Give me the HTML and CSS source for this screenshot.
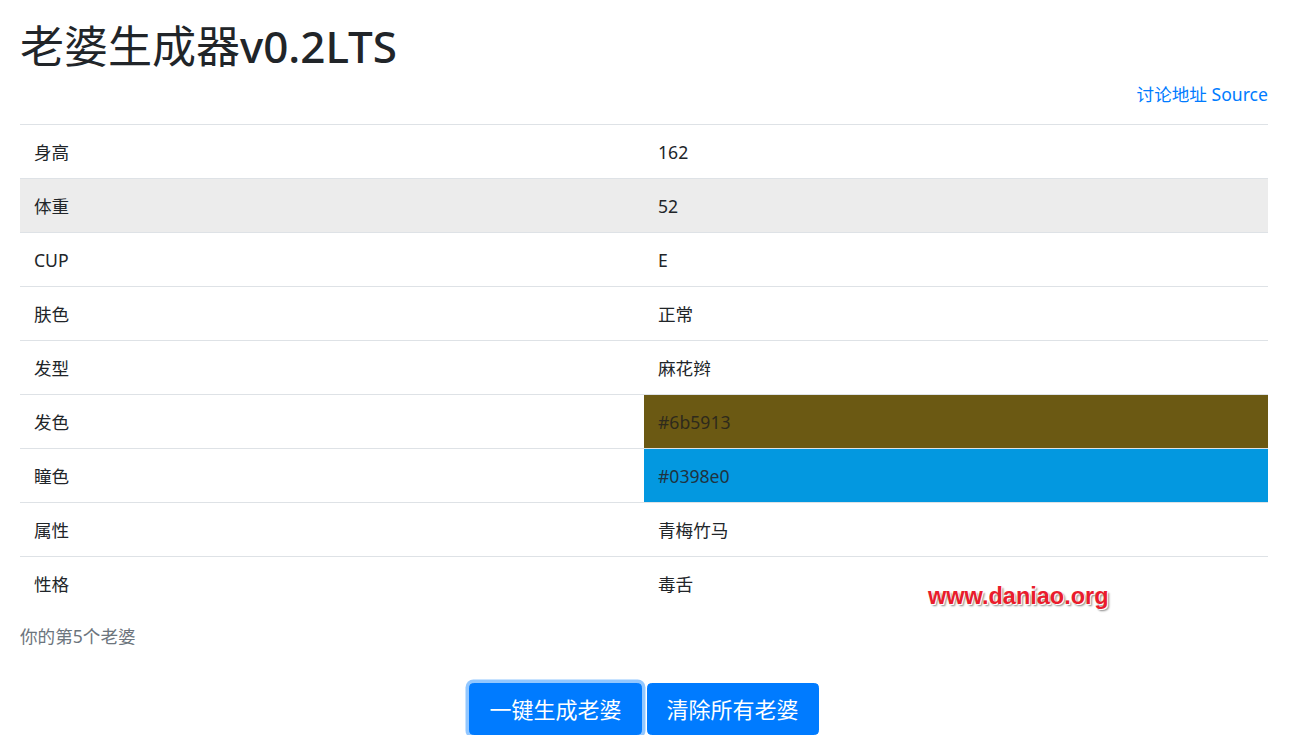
FILE: index.html
```html
<!DOCTYPE html>
<html lang="zh-CN">
<head>
    <meta charset="UTF-8">
    <title>老婆生成器v0.2LTS</title>
    <link rel="stylesheet" href="styles.css">
</head>
<body>
    <div class="container">
        <!-- 标题 -->
        <h1 class="title">老婆生成器<span class="ver">v0.2LTS</span></h1>
        <p class="links"><a href="javascript:;">讨论地址</a> <a href="javascript:;">Source</a></p>

        <!-- 老婆属性表 -->
        <table class="table">
            <tr><td>身高</td><td>162</td></tr>
            <tr class="hover"><td>体重</td><td>52</td></tr>
            <tr><td>CUP</td><td>E</td></tr>
            <tr><td>肤色</td><td>正常</td></tr>
            <tr><td>发型</td><td>麻花辫</td></tr>
            <tr><td>发色</td><td class="hair">#6b5913</td></tr>
            <tr><td>瞳色</td><td class="eye">#0398e0</td></tr>
            <tr><td>属性</td><td>青梅竹马</td></tr>
            <tr><td>性格</td><td>毒舌</td></tr>
            <caption>你的第5个老婆</caption>
        </table>

        <!-- 按钮 -->
        <div class="btns">
            <a href="javascript:;" class="btn focus">一键生成老婆</a>
            <a href="javascript:;" class="btn">清除所有老婆</a>
        </div>

        <!-- 水印 -->
        <div class="mark">www.daniao.org</div>
    </div>
</body>
</html>
```

FILE: styles.css
```css
*{
    margin: 0;
    padding: 0;
    box-sizing: border-box;
}
body{
    font-family: "Noto Sans", "Noto Sans CJK SC", sans-serif;
    font-size: 17.6px;
    line-height: 26.4px;
    color: #212529;
    background: #fff;
}
.container{
    position: relative;
    padding: 20px 40px 0 20px;
}
.title{
    font-size: 44px;
    font-weight: 400;
    line-height: 53px;
    margin-bottom: 8px;
}
.title .ver{
    font-weight: 500;
}
.links{
    text-align: right;
    margin-bottom: 17px;
}
.links a{
    color: #007bff;
    text-decoration: none;
}
.table{
    width: 100%;
    border-collapse: collapse;
    caption-side: bottom;
}
.table td{
    width: 50%;
    padding: 13.3px 14px;
    border-top: 1px solid #dee2e6;
    vertical-align: top;
}
.table tr.hover td{
    background: #ececec;
}
.table td.hair{
    background: #6b5913;
    color: #2e2a1c;
}
.table td.eye{
    background: #0398e0;
    color: #1f3340;
}
.table caption{
    text-align: left;
    color: #6c757d;
    padding: 13px 0;
}
/* 按钮 */
.btns{
    display: flex;
    justify-content: center;
    gap: 5px;
    padding-top: 20px;
}
.btn{
    display: block;
    font-size: 22px;
    line-height: 33px;
    padding: 8.8px 19px;
    border: 1px solid #007bff;
    border-radius: 4.5px;
    background: #007bff;
    color: #fff;
    text-decoration: none;
}
.btn.focus{
    box-shadow: 0 0 0 3.5px rgba(38, 143, 255, .5);
}
/* 水印 */
.mark{
    position: absolute;
    left: 928px;
    top: 581px;
    font-family: "Liberation Sans", sans-serif;
    font-weight: bold;
    font-size: 23.5px;
    line-height: 30px;
    color: #ea1c2c;
    text-shadow: 1px 1px 0 #fff, 2px 2px 2px #888;
}
```
